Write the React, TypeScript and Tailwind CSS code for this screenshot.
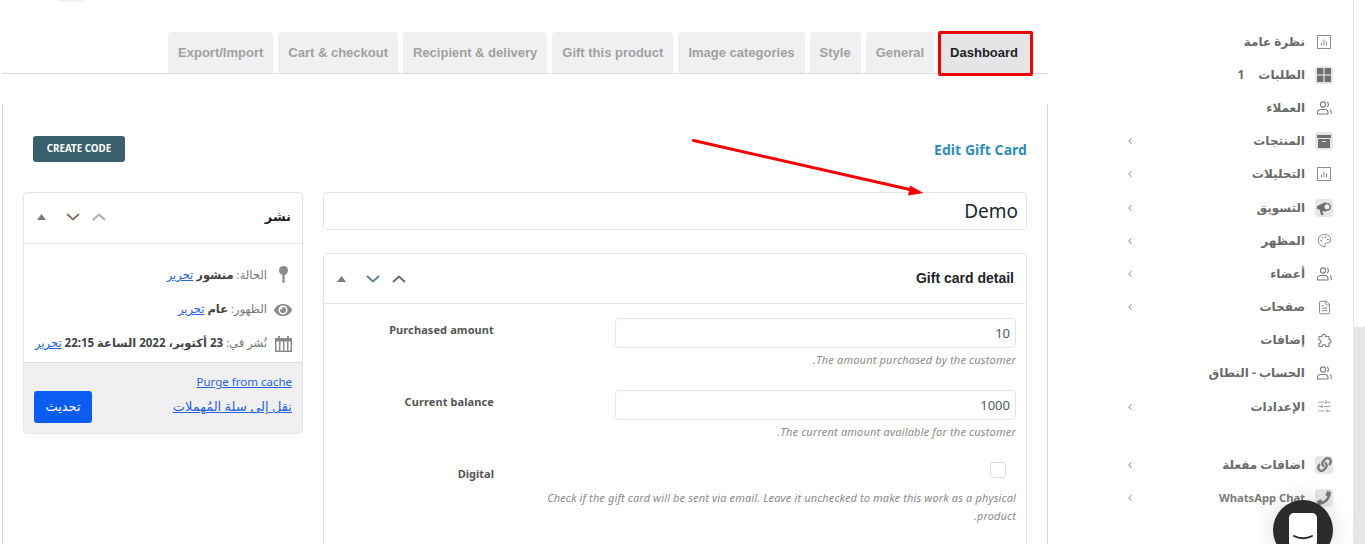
import { FaEye, FaLink, FaPhone } from "react-icons/fa";
import { ChevronLeft, FileText, Palette, SlidersHorizontal } from "lucide-react";

const tabs = ["Dashboard", "General", "Style", "Image categories", "Gift this product", "Recipient & delivery", "Cart & checkout", "Export/Import"];

const ChartIcon = () => (
  <svg width="14" height="14" viewBox="0 0 14 14" fill="none" stroke="#8a8a8a">
    <rect x="0.5" y="0.5" width="13" height="13" />
    <path d="M4.5 10.5V8M7 10.5V4.5M9.5 10.5V6.5" />
  </svg>
);

const UsersIcon = () => (
  <svg width="16" height="14" viewBox="0 0 16 14" fill="none" stroke="#7d7d7d" strokeWidth="1.1">
    <circle cx="7" cy="3.5" r="2.6" />
    <path d="M1.5 13v-1.5C1.5 9.5 3 8.5 5 8.5h4c2 0 3 1 3 3V13z" />
    <path d="M11 1.2a2.5 2.5 0 0 1 0 4.6M14 8.8c.8.5 1.3 1.4 1.3 2.7V13" />
  </svg>
);

const GridIcon = () => (
  <svg width="14" height="14" viewBox="0 0 14 14" fill="#6f6f6f">
    <rect width="6.4" height="6.4" />
    <rect x="7.6" width="6.4" height="6.4" />
    <rect y="7.6" width="6.4" height="6.4" />
    <rect x="7.6" y="7.6" width="6.4" height="6.4" />
  </svg>
);

const ArchiveIcon = () => (
  <svg width="14" height="13" viewBox="0 0 14 13" fill="#6f6f6f">
    <rect width="14" height="3" />
    <path d="M1 4h12v9H1zM5 6v1h4V6z" fillRule="evenodd" />
  </svg>
);

const MegaphoneIcon = () => (
  <svg width="16" height="16" viewBox="0 0 16 16">
    <path d="M1 6l9-4v10L6.5 10.5 7.5 15H5L3.7 9.6 1 9z" fill="#6f6f6f" />
    <circle cx="11" cy="6.8" r="3.2" fill="#f2f2f2" stroke="#6f6f6f" strokeWidth="1.4" />
  </svg>
);

const PuzzleIcon = () => (
  <svg width="15" height="15" viewBox="0 0 15 15" fill="none" stroke="#7d7d7d" strokeWidth="1.1" strokeLinejoin="round">
    <path d="M2 3.5h3c-.8-2.8 4.2-2.8 3.4 0H12v3.2c2.6-.8 2.6 4 0 3.2v3.6H8.6c.8-2.6-4-2.6-3.2 0H2v-3.2c2.6.6 2.6-3.9 0-3.3z" />
  </svg>
);

const menu = [
  { label: "نظرة عامة", icon: <ChartIcon /> },
  { label: "الطلبات", icon: <GridIcon />, box: true, count: "1" },
  { label: "العملاء", icon: <UsersIcon /> },
  { label: "المنتجات", icon: <ArchiveIcon />, box: true, arrow: true },
  { label: "التحليلات", icon: <ChartIcon />, arrow: true },
  { label: "التسويق", icon: <MegaphoneIcon />, box: true, arrow: true },
  { label: "المظهر", icon: <Palette size={15} color="#7d7d7d" strokeWidth={1.4} />, arrow: true },
  { label: "أعضاء", icon: <UsersIcon />, arrow: true },
  { label: "صفحات", icon: <FileText size={15} color="#7d7d7d" strokeWidth={1.4} />, arrow: true },
  { label: "إضافات", icon: <PuzzleIcon /> },
  { label: "الحساب - النطاق", icon: <UsersIcon /> },
  { label: "الإعدادات", icon: <SlidersHorizontal size={15} color="#7d7d7d" strokeWidth={1.2} />, arrow: true },
];

const extras = [
  { label: "اضافات مفعلة", icon: <FaLink size={15} color="#7a7a7a" /> },
  { label: "WhatsApp Chat", icon: <FaPhone size={14} color="#7a7a7a" />, small: true },
];

type MenuRowProps = { label: string; icon: React.ReactNode; box?: boolean; count?: string; arrow?: boolean; small?: boolean };

const MenuRow = ({ label, icon, box, count, arrow, small }: MenuRowProps) => (
  <div className="flex h-[33.2px] items-center gap-[10px]">
    <span className={`flex size-[18px] items-center justify-center rounded-[3px] ${box ? "bg-[#e6e6e8]" : ""}`}>{icon}</span>
    <span className={`font-bold ${small ? "text-[11.2px] text-[#7a7a7a]" : "text-[12px] text-[#6a6a6a]"}`}>{label}</span>
    {count && <span className="ms-[4px] text-[12px] font-bold text-[#6a6a6a]">{count}</span>}
    {arrow && <ChevronLeft size={10} color="#666" className="ms-auto" />}
  </div>
);

const BoxControls = ({ up, down }: { up: string; down: string }) => (
  <div className="flex items-center">
    <svg width="14" height="8" viewBox="0 0 14 8" fill="none" stroke={up} strokeWidth="2">
      <path d="M1 7l6-5.5L13 7" />
    </svg>
    <svg width="14" height="8" viewBox="0 0 14 8" fill="none" stroke={down} strokeWidth="2" className="ms-[12px]">
      <path d="M1 1l6 5.5L13 1" />
    </svg>
    <svg width="9" height="6" viewBox="0 0 9 6" fill="#787c82" className="ms-[20px]">
      <path d="M4.5 0L9 6H0z" />
    </svg>
  </div>
);

const Field = ({ label, value, hint }: { label: string; value: string; hint: string }) => (
  <div className="flex h-[72px]">
    <div className="mr-[10px] w-[401px]">
      <div className="flex h-[30px] items-center rounded-[4px] border border-[#e4e4e6] px-[5px] pt-[1px] text-[13px] text-[#50575e]" dir="ltr">
        <span className="ml-auto">{value}</span>
      </div>
      <p className="-ml-[1px] mt-[3px] text-[11px] italic leading-[18px] tracking-[0.18px] text-[#8a8a8a]">{hint}</p>
    </div>
    <div className="mr-[121px] pt-[3px] text-[11px] font-bold leading-[18px] tracking-[0.1px] text-[#555]" dir="ltr">{label}</div>
  </div>
);

const App = () => {
  return (
    <div className="relative flex h-[544px] overflow-hidden bg-white font-['Noto_Sans','DejaVu_Sans',sans-serif]" dir="rtl">
      {/* scrollbar */}
      <div className="w-[12px] shrink-0 bg-[#e6e6e8]">
        <div className="h-[327px] rounded-b-[3px] border-l border-[#e6e6e8] bg-white" />
      </div>

      {/* side menu */}
      <aside className="w-[305px] shrink-0 pt-[25px] pr-[20px] pl-[77px]">
        {menu.map((item) => (
          <MenuRow key={item.label} {...item} />
        ))}
        <div className="mt-[25px]">
          {extras.map((item) => (
            <MenuRow key={item.label} {...item} box arrow />
          ))}
        </div>
      </aside>

      {/* main */}
      <main className="w-[1046px] shrink-0">
        <div className="flex h-[74px] items-end gap-[5px] border-b border-[#dcdcde] pt-[32px] pr-[15px] font-['Liberation_Sans',sans-serif]">
          {tabs.map((tab) => (
            <div
              key={tab}
              className={`flex h-[41px] items-center rounded-t-[4px] text-[13px] font-bold ${tab === "Dashboard" ? "bg-[#e5e5e7] pr-[15px] pl-[11px] text-[#1d2327]" : "bg-[#f0f0f2] px-[10px] text-[#a0a0a0]"}`}
            >
              {tab}
            </div>
          ))}
        </div>

        <div className="mt-[30px] h-[440px] border-x border-[#d5d5d7] pt-[32px] pr-[20px] pl-[20px]">
          <div className="flex h-[26px] items-center justify-between pl-[10px]">
            <span className="text-[14px] font-bold tracking-[0.05px] text-[#2f8db3]" dir="ltr">Edit Gift Card</span>
            <button className="flex h-[26px] w-[92px] items-center justify-center rounded-[3px] bg-[#3a5f6d] text-[9.8px] font-bold text-white" dir="ltr">
              CREATE CODE
            </button>
          </div>

          <div className="mt-[30px] flex gap-[20px]">
            <div className="w-[704px] shrink-0">
              <div className="flex h-[38px] items-center rounded-[4px] border border-[#e4e4e6] px-[8px] text-[19px] text-[#23282d]" dir="ltr">
                <span className="ml-auto">Demo</span>
              </div>

              <div className="mt-[23px] h-[400px] rounded-t-[4px] border border-[#e4e4e6]">
                <div className="flex h-[50px] items-center justify-between border-b border-[#e4e4e6] pr-[12px] pl-[13px]">
                  <span className="font-['Liberation_Sans',sans-serif] text-[14px] font-bold text-[#1d2327]" dir="ltr">Gift card detail</span>
                  <BoxControls up="#6f6a68" down="#5f7f9f" />
                </div>
                <div className="pt-[14px]">
                  <Field label="Purchased amount" value="10" hint="The amount purchased by the customer." />
                  <Field label="Current balance" value="1000" hint="The current amount available for the customer." />
                  <div className="flex">
                    <div className="mr-[10px] w-[475px]">
                      <span className="mr-[10px] block size-[16px] rounded-[3px] border border-[#dcdcde]" />
                      <p className="-ml-[1px] mt-[11px] text-[11px] italic leading-[18px] tracking-[0.13px] text-[#8a8a8a]">
                        Check if the gift card will be sent via email. Leave it unchecked to make this work as a physical product.
                      </p>
                    </div>
                    <div className="mr-[47px] pt-[3px] text-[11px] font-bold leading-[18px] text-[#555]" dir="ltr">Digital</div>
                  </div>
                </div>
              </div>
            </div>

            <div className="h-[242px] w-[280px] shrink-0 overflow-hidden rounded-[4px] border border-[#e4e4e6]">
              <div className="flex h-[51px] items-center justify-between border-b border-[#e4e4e6] pr-[11px] pb-[2px] pl-[13px]">
                <span className="text-[13px] font-bold text-[#1d2327]">نشر</span>
                <BoxControls up="#a6aeb6" down="#857565" />
              </div>
              <div className="h-[119px] border-b border-[#dcdcde] pt-[22px] pr-[9px] text-[11.5px] text-[#777]">
                <div className="flex h-[34px] items-start gap-[6px]">
                  <span className="flex h-[20px] w-[20px] justify-center">
                    <svg width="9" height="17" viewBox="0 0 9 17" fill="#8a8a8a">
                      <circle cx="4.5" cy="4.5" r="4.5" />
                      <rect x="3.4" y="7" width="2.2" height="10" rx="1" />
                    </svg>
                  </span>
                  <span>
                    الحالة: <b className="text-[#444]">منشور</b> <span className="text-[#2a62d8] underline">تحرير</span>
                  </span>
                </div>
                <div className="flex h-[34px] items-start gap-[6px]">
                  <span className="flex h-[20px] w-[20px] items-center justify-center">
                    <FaEye size={18} color="#8a8a8a" />
                  </span>
                  <span>
                    الظهور: <b className="text-[#444]">عام</b> <span className="text-[#2a62d8] underline">تحرير</span>
                  </span>
                </div>
                <div className="flex h-[34px] items-start gap-[6px]">
                  <span className="flex h-[20px] w-[20px] items-center justify-center">
                    <svg width="17" height="16" viewBox="0 0 17 16" fill="#8a8a8a">
                      <path d="M0 2h3V0h2v2h7V0h2v2h3v14H0zM1.5 5.5v9H4v-9zm4 0v9H8v-9zm4 0v9H12v-9zm4 0v9h2v-9z" fillRule="evenodd" />
                    </svg>
                  </span>
                  <span className="whitespace-nowrap">
                    نُشر في: <b className="text-[#444]">23 أكتوبر، 2022 الساعة 22:15</b> <span className="text-[#2a62d8] underline">تحرير</span>
                  </span>
                </div>
              </div>
              <div className="flex h-[70px] items-end justify-between bg-[#f0f0f2] pr-[10px] pb-[10px] pl-[10px]">
                <div className="mb-auto flex flex-col gap-[6px] pt-[10px] text-[11.5px] leading-[18px] text-[#2a62d8] underline">
                  <span className="text-right" dir="ltr">Purge from cache</span>
                  <span className="text-[13px]">نقل إلى سلة المُهملات</span>
                </div>
                <button className="h-[32px] w-[58px] rounded-[3px] bg-[#0b5cf0] text-[13px] text-white">تحديث</button>
              </div>
            </div>
          </div>
        </div>
      </main>

      {/* annotation: red frame around the active tab */}
      <div className="absolute top-[31px] left-[938px] h-[45px] w-[95px] rounded-[2px] border-[3px] border-[#f00000]" />

      {/* annotation: red arrow */}
      <svg className="absolute top-0 left-0" width="1048" height="220" fill="none">
        <path d="M693.5 140.5L912 190" stroke="#f40000" strokeWidth="3" strokeLinecap="round" />
        <path d="M910 185.5L923.5 193L908 195.5z" fill="#f40000" />
      </svg>

      {/* leftover tab edge at the top */}
      <div className="absolute top-0 left-[58px] h-[2px] w-[27px] rounded-b-[2px] bg-[#f0f0f2]" />

      {/* chat launcher */}
      <div className="absolute top-[500px] left-[1273px] size-[60px] rounded-full bg-[#2b2b2b] shadow-[0_0_24px_rgba(0,0,0,0.15)]">
        <div className="absolute top-[13px] left-[16px] h-[34px] w-[28px] rounded-[5px] bg-white">
          <svg className="absolute top-[21px] left-[3px]" width="22" height="8" viewBox="0 0 22 8" fill="none" stroke="#2b2b2b" strokeWidth="2" strokeLinecap="round">
            <path d="M2 2c5 3 13 3 18 0" />
          </svg>
        </div>
      </div>
    </div>
  );
};

export default App;
